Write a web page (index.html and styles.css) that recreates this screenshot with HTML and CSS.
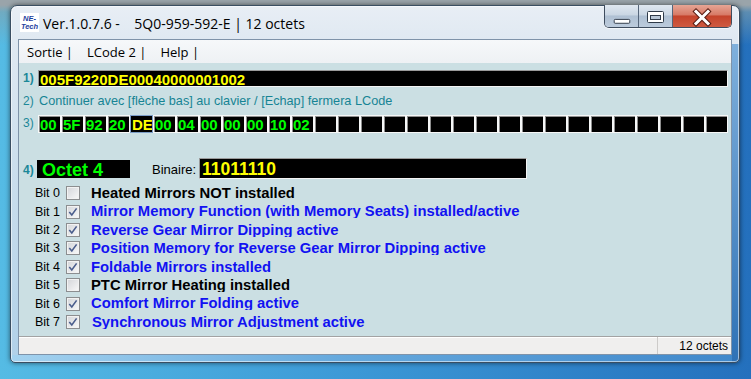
FILE: index.html
```html
<!DOCTYPE html>
<html>
<head>
<meta charset="utf-8">
<link rel="stylesheet" href="styles.css">
</head>
<body>
<div class="win">
  <div class="titlebar">
    <div class="appicon"><span>NE-</span><span>Tech</span></div>
    <div class="title">Ver.1.0.7.6 -    5Q0-959-592-E | 12 octets</div>
    <div class="caps">
      <div class="cap min"><svg width="34" height="22" viewBox="0 0 34 22"><rect x="9.5" y="14.5" width="16" height="4" rx="1" fill="#fff" stroke="#2f3a48"/></svg></div>
      <div class="cap max"><svg width="33" height="22" viewBox="0 0 33 22"><rect x="8.5" y="6.5" width="16" height="11" rx="1" fill="#fff" stroke="#2f3a48"/><rect x="11.5" y="10.5" width="10" height="4" fill="#b9c7d7" stroke="#2f3a48"/></svg></div>
      <div class="cap close"><svg width="58" height="22" viewBox="0 0 58 22"><path d="M23 6.5 L35 18.5 M35 6.5 L23 18.5" stroke="#5a1e14" stroke-width="5" stroke-linecap="square"/><path d="M23 6.5 L35 18.5 M35 6.5 L23 18.5" stroke="#fff" stroke-width="3" stroke-linecap="square"/></svg></div>
    </div>
  </div>
  <div class="client">
    <div class="menubar">
      <span class="mitem">Sortie |</span>
      <span class="mitem">LCode 2 |</span>
      <span class="mitem">Help |</span>
    </div>
    <div class="panel">
      <div class="row row1">
        <span class="num b">1)</span>
        <div class="hexbox">005F9220DE00040000001002</div>
      </div>
      <div class="row row2">
        <span class="num">2)</span>
        <span class="hint">Continuer avec [flèche bas] au clavier / [Echap] fermera LCode</span>
      </div>
      <div class="row row3">
        <span class="num">3)</span>
        <div class="cells">
          <span class="cell">00</span><span class="cell">5F</span><span class="cell">92</span><span class="cell">20</span><span class="cell sel">DE</span><span class="cell">00</span><span class="cell">04</span><span class="cell">00</span><span class="cell">00</span><span class="cell">00</span><span class="cell">10</span><span class="cell">02</span><span class="cell"></span><span class="cell"></span><span class="cell"></span><span class="cell"></span><span class="cell"></span><span class="cell"></span><span class="cell"></span><span class="cell"></span><span class="cell"></span><span class="cell"></span><span class="cell"></span><span class="cell"></span><span class="cell"></span><span class="cell"></span><span class="cell"></span><span class="cell"></span><span class="cell"></span><span class="cell"></span>
        </div>
      </div>
      <div class="row row4">
        <span class="num b n4">4)</span>
        <div class="octet">Octet 4</div>
        <span class="binlbl">Binaire:</span>
        <div class="binbox">11011110</div>
      </div>
      <div class="bits">
        <span class="bitn">Bit 0</span><span class="chk"></span><span class="lbl off">Heated Mirrors NOT installed</span>
        <span class="bitn">Bit 1</span><span class="chk on"><svg width="12" height="12" viewBox="0 0 12 12"><path d="M2.3 6 L4.8 9 L9.6 2.4" fill="none" stroke="#4a5d8c" stroke-width="1.6"/></svg></span><span class="lbl">Mirror Memory Function (with Memory Seats) installed/active</span>
        <span class="bitn">Bit 2</span><span class="chk on"><svg width="12" height="12" viewBox="0 0 12 12"><path d="M2.3 6 L4.8 9 L9.6 2.4" fill="none" stroke="#4a5d8c" stroke-width="1.6"/></svg></span><span class="lbl">Reverse Gear Mirror Dipping active</span>
        <span class="bitn">Bit 3</span><span class="chk on"><svg width="12" height="12" viewBox="0 0 12 12"><path d="M2.3 6 L4.8 9 L9.6 2.4" fill="none" stroke="#4a5d8c" stroke-width="1.6"/></svg></span><span class="lbl">Position Memory for Reverse Gear Mirror Dipping active</span>
        <span class="bitn">Bit 4</span><span class="chk on"><svg width="12" height="12" viewBox="0 0 12 12"><path d="M2.3 6 L4.8 9 L9.6 2.4" fill="none" stroke="#4a5d8c" stroke-width="1.6"/></svg></span><span class="lbl">Foldable Mirrors installed</span>
        <span class="bitn">Bit 5</span><span class="chk"></span><span class="lbl off">PTC Mirror Heating installed</span>
        <span class="bitn">Bit 6</span><span class="chk on"><svg width="12" height="12" viewBox="0 0 12 12"><path d="M2.3 6 L4.8 9 L9.6 2.4" fill="none" stroke="#4a5d8c" stroke-width="1.6"/></svg></span><span class="lbl">Comfort Mirror Folding active</span>
        <span class="bitn">Bit 7</span><span class="chk on"><svg width="12" height="12" viewBox="0 0 12 12"><path d="M2.3 6 L4.8 9 L9.6 2.4" fill="none" stroke="#4a5d8c" stroke-width="1.6"/></svg></span><span class="lbl shift">Synchronous Mirror Adjustment active</span>
      </div>
    </div>
    <div class="status">
      <div class="st-main"></div>
      <div class="st-part">12 octets</div>
    </div>
  </div>
</div>
</body>
</html>
```
FILE: styles.css
```css
* { box-sizing: border-box; margin: 0; padding: 0; }
html, body { width: 751px; height: 379px; overflow: hidden; }
body {
  padding: 5px 0 0 10px;
  font-family: "Liberation Sans", Arial, sans-serif;
  background:
    linear-gradient(to bottom, #9aa4aa 0, #9aa4aa 5px, rgba(130,160,170,0.6) 12px, rgba(130,160,170,0) 45px),
    linear-gradient(to right, #55bbe4 0, #3d9ad7 45%, #2470bd 100%);
}
.win {
  width: 730px;
  height: 358px;
  border: 1px solid #3a4e62;
  border-radius: 7px 7px 5px 5px;
  padding: 0 7px 7px 7px;
  display: flex;
  flex-direction: column;
  box-shadow: 0 0 5px rgba(0,0,0,0.55), inset 0 0 0 1px rgba(255,255,255,0.55);
  background:
    linear-gradient(#7fb0dc, #2f72b6) right bottom / 7px 318px no-repeat,
    linear-gradient(to right, #a4d2ef, #66a9dd 45%, #4088cb) left bottom / 100% 7px no-repeat,
    linear-gradient(#e8eef5 0, #e0e9f2 33px, #cddfed 150px, #b0d0e8 357px);
}
.titlebar {
  height: 33px;
  display: flex;
  align-items: center;
  flex-shrink: 0;
}
.appicon {
  width: 19px;
  height: 19px;
  margin-left: 2px;
  background: #fff;
  display: flex;
  flex-direction: column;
  align-items: center;
  justify-content: center;
  color: #1d3e9e;
  font-weight: bold;
  font-style: italic;
  font-size: 7.5px;
  line-height: 7.5px;
}
.title {
  margin-left: 4px;
  font-family: "Open Sans", "Noto Sans", sans-serif;
  font-size: 14px;
  white-space: pre;
  color: #000;
  padding-top: 2px;
}
.caps {
  margin-left: auto;
  align-self: flex-start;
  margin-top: -1px;
  display: flex;
  height: 23px;
  border: 1px solid #3e4c5e;
  border-top: none;
  border-radius: 0 0 5px 5px;
  overflow: hidden;
  box-shadow: 0 1px 0 rgba(255,255,255,0.6);
}
.cap { height: 22px; display: flex; }
.cap.min, .cap.max {
  background: linear-gradient(#dfe7f0 0, #cad6e3 45%, #afc0d3 50%, #bccbdc 100%);
  border-right: 1px solid #55657a;
}
.cap.min { width: 34px; }
.cap.max { width: 34px; }
.cap.close {
  width: 58px;
  background: linear-gradient(#e6a595 0, #d77a66 45%, #c4432b 50%, #cf5a41 100%);
}
.client {
  flex: 1;
  display: flex;
  flex-direction: column;
  border: 1px solid #7f93a9;
  background: #cbdfe3;
}
.menubar {
  height: 23px;
  flex-shrink: 0;
  display: flex;
  align-items: center;
  padding-left: 1px;
  padding-top: 1px;
  background: linear-gradient(#f6f8fa, #eef1f4);
}
.mitem {
  padding: 0 7px;
  font-family: "Open Sans", "Noto Sans", sans-serif;
  font-size: 13px;
  white-space: pre;
  color: #000;
}
.panel {
  flex: 1;
  padding: 7px 3px 0 4px;
  display: flex;
  flex-direction: column;
}
.row { display: flex; }
.num {
  width: 15px;
  flex-shrink: 0;
  font-size: 12px;
  color: #1c8898;
}
.num.b { font-weight: bold; }
.row1 { height: 17px; }
.row1 .num { padding-top: 2px; line-height: 12px; }
.hexbox {
  flex: 1;
  height: 17px;
  background: #000;
  border: 1px solid;
  border-color: #9a9a9a #f4f4f4 #f4f4f4 #9a9a9a;
  color: #ffff00;
  font-weight: bold;
  font-size: 15px;
  line-height: 15px;
  padding: 1px 0 0 1px;
}
.row2 { margin-top: 6px; height: 16px; line-height: 16px; }
.hint {
  padding-left: 1px;
  font-size: 12.7px;
  color: #168494;
  white-space: nowrap;
}
.row3 { margin-top: 6px; height: 18px; }
.row3 .num { line-height: 16px; }
.cells { display: flex; }
.cell {
  width: 23px;
  height: 18px;
  flex-shrink: 0;
  overflow: hidden;
  background: #000;
  border: 1px solid #f6f7f7;
  box-shadow: inset 1px 1px 0 #8e8e8e;
  color: #00ff00;
  font-weight: bold;
  font-size: 15px;
  line-height: 16px;
  padding: 1px 0 0 1px;
  white-space: nowrap;
}
.cell.sel {
  color: #ffff00;
  border-color: #7d9ec8;
  box-shadow: none;
}
.row4 {
  margin-top: 25px;
  height: 21px;
  align-items: center;
}
.num.n4 { width: 14px; padding-top: 3px; }
.octet {
  width: 93px;
  height: 18px;
  background: #000;
  color: #00ff00;
  font-weight: bold;
  font-size: 18px;
  line-height: 16px;
  padding: 2px 0 0 5px;
}
.binlbl {
  margin-left: 22px;
  width: 47px;
  font-size: 13px;
  color: #000;
  padding-top: 2px;
}
.binbox {
  width: 328px;
  height: 21px;
  background: #000;
  border: 1px solid;
  border-color: #9a9a9a #f4f4f4 #f4f4f4 #9a9a9a;
  color: #ffff00;
  font-weight: bold;
  font-size: 17.5px;
  line-height: 17px;
  padding: 2px 0 0 2px;
}
.bits {
  margin-top: 5px;
  margin-left: 12px;
  display: grid;
  grid-template-columns: 31px 25px 1fr;
  grid-auto-rows: 18.4px;
  align-items: center;
}
.bitn {
  font-size: 12.5px;
  color: #000;
  line-height: 14px;
}
.chk {
  width: 14px;
  height: 14px;
  border: 1px solid #8c8e90;
  box-shadow: inset 0 0 0 1px #f2f2f2;
  background: linear-gradient(135deg, #d3d5d9, #f9f9f9);
  display: flex;
}
.lbl {
  align-self: start;
  margin-top: 1px;
  height: 15px;
  overflow: hidden;
  font-weight: bold;
  font-size: 14.8px;
  line-height: 17px;
  color: #1212f2;
  white-space: nowrap;
}
.lbl.off { color: #000; }
.lbl.shift { padding-left: 1px; }
.status {
  height: 18px;
  flex-shrink: 0;
  display: flex;
  background: #f0efee;
  border-top: 1px solid #a3a3a3;
  box-shadow: inset 0 1px 0 #ffffff;
}
.st-main { flex: 1; }
.st-part {
  width: 74px;
  border-left: 1px solid #cdcbc9;
  text-align: right;
  padding-right: 3px;
  font-size: 12px;
  line-height: 18px;
  color: #000;
}
```
